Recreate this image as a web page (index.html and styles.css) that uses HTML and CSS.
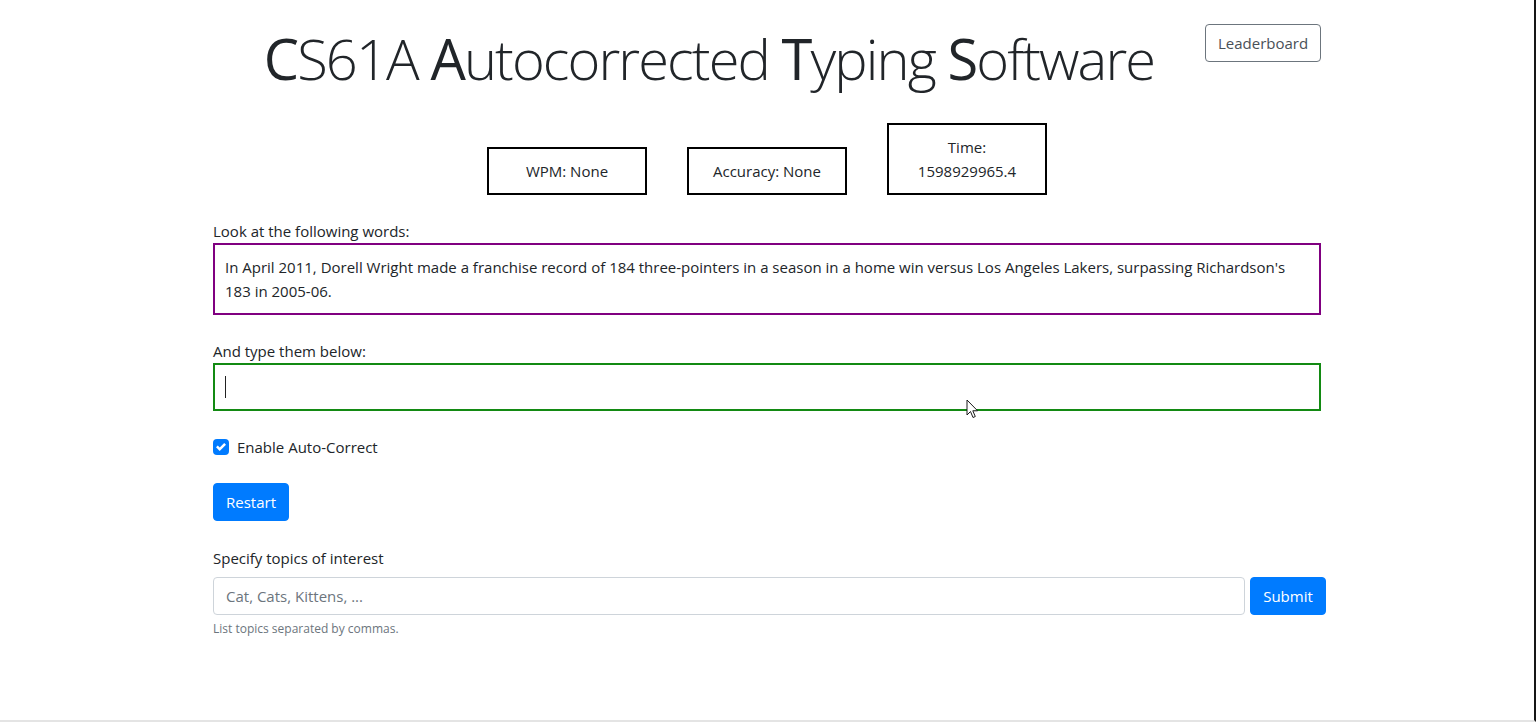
FILE: index.html
```html
<!DOCTYPE html>
<html lang="en">
<head>
<meta charset="utf-8">
<title>CS61A Autocorrected Typing Software</title>
<link rel="stylesheet" href="styles.css">
</head>
<body>
<div class="page">
  <div class="container">
    <header class="top">
      <h1 class="title"><b>C</b>S61A <b>A</b>utocorrected <b>T</b>yping <b>S</b>oftware</h1>
      <button class="btn btn-outline">Leaderboard</button>
    </header>

    <div class="stats">
      <div class="stat">WPM: None</div>
      <div class="stat">Accuracy: None</div>
      <div class="stat">Time:<br>1598929965.4</div>
    </div>

    <div class="field">
      <div class="label">Look at the following words:</div>
      <div class="prompt">In April 2011, Dorell Wright made a franchise record of 184 three-pointers in a season in a home win versus Los Angeles Lakers, surpassing Richardson's 183 in 2005-06.</div>
    </div>

    <div class="field">
      <div class="label">And type them below:</div>
      <div class="typed"><span class="caret"></span></div>
    </div>

    <label class="check">
      <span class="check-box"><svg viewBox="0 0 8 8" width="10" height="10"><path d="M6.564.75l-3.59 3.612-1.538-1.55L0 4.26 2.974 7.25 8 2.193z" fill="#fff"/></svg></span>
      <span>Enable Auto-Correct</span>
    </label>

    <div class="actions">
      <button class="btn btn-primary">Restart</button>
    </div>

    <div class="topics">
      <div class="label topics-label">Specify topics of interest</div>
      <div class="topics-row">
        <input class="topics-input" type="text" placeholder="Cat, Cats, Kittens, ...">
        <button class="btn btn-primary">Submit</button>
      </div>
      <div class="help">List topics separated by commas.</div>
    </div>
  </div>

  <svg class="pointer" width="13" height="21" viewBox="0 0 13 21"><path d="M1 1 L1 16 L4.5 12.5 L7 18.5 L9.3 17.5 L6.8 11.8 L11.6 11.8 Z" fill="#fff" stroke="#1b1b1b" stroke-width="1" stroke-linejoin="round"/></svg>
</div>
</body>
</html>
```

FILE: styles.css
```css
* { box-sizing: border-box; }

html, body {
  margin: 0;
  padding: 0;
  background: #fff;
}

body {
  font-family: "Open Sans", "Noto Sans", "Liberation Sans", sans-serif;
  font-size: 15px;
  line-height: 24px;
  color: #212529;
}

.page {
  position: relative;
  height: 722px;
  border-right: 2px solid #161616;
  border-bottom: 2px solid #e4e4e4;
  overflow: hidden;
}

.container {
  width: 1108px;
  margin: 0 auto;
  padding-top: 24px;
}

.top {
  display: flex;
  align-items: flex-start;
}

.title {
  flex: 1;
  margin: 0;
  text-align: center;
  font-size: 56px;
  line-height: 68px;
  font-weight: 300;
  letter-spacing: -1.9px;
  color: #212529;
}

.title b {
  font-weight: 400;
}

.btn {
  font-family: inherit;
  font-size: 15px;
  line-height: 24px;
  padding: 6px 12px;
  border-radius: 4px;
  border: 1px solid transparent;
  cursor: pointer;
}

.btn-outline {
  background: #fff;
  border-color: #6c757d;
  color: #495057;
  width: 116px;
}

.btn-primary {
  background: #007bff;
  border-color: #007bff;
  color: #fff;
}

.stats {
  display: flex;
  justify-content: center;
  align-items: flex-end;
  gap: 40px;
  margin-top: 31px;
}

.stat {
  width: 160px;
  border: 2px solid #000;
  padding: 10px;
  text-align: center;
}

.field {
  margin-top: 25px;
}

.label {
  line-height: 23px;
}

.prompt {
  border: 2px solid #800080;
  padding: 10px;
}

.typed {
  border: 2px solid #138a13;
  height: 48px;
  padding: 10px;
  display: flex;
  align-items: center;
}

.caret {
  display: block;
  width: 1px;
  height: 22px;
  background: #222;
}

.check {
  display: flex;
  align-items: center;
  gap: 8px;
  margin-top: 24px;
  height: 24px;
}

.check-box {
  width: 16px;
  height: 16px;
  border-radius: 4px;
  background: #007bff;
  display: flex;
  align-items: center;
  justify-content: center;
}

.actions {
  margin-top: 24px;
}

.actions .btn {
  width: 76px;
  padding: 6px 0;
}

.topics {
  margin-top: 25px;
}

.topics-label {
  line-height: 24px;
  margin-bottom: 7px;
}

.topics-row {
  display: flex;
  gap: 5px;
  margin-right: -5px;
}

.topics-input {
  flex: 1;
  height: 38px;
  border: 1px solid #ced4da;
  border-radius: 4px;
  padding: 6px 12px;
  font-family: inherit;
  font-size: 15px;
  color: #495057;
}

.topics-input::placeholder {
  color: #6c757d;
}

.topics-row .btn {
  width: 76px;
  padding: 6px 0;
}

.help {
  margin-top: 4px;
  font-size: 12px;
  line-height: 19px;
  color: #6c757d;
}

.pointer {
  position: absolute;
  left: 966px;
  top: 399px;
}
```
